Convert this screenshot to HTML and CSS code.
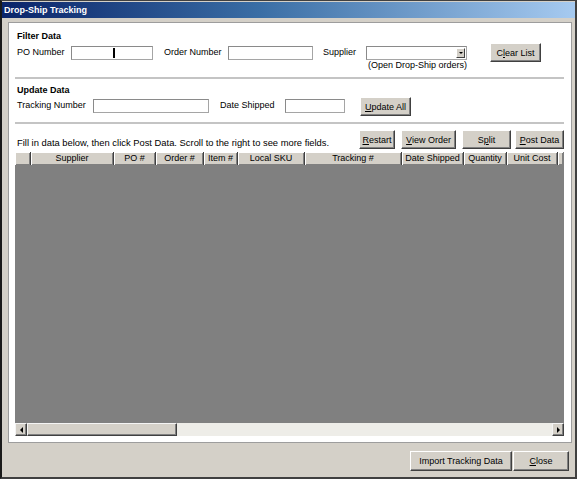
FILE: index.html
```html
<!DOCTYPE html>
<html>
<head>
<meta charset="utf-8">
<link rel="stylesheet" href="styles.css">
</head>
<body>
<div class="window">
  <div class="titlebar">Drop-Ship Tracking</div>
  <div class="client">
    <div class="panel">
      <div class="group-title">Filter Data</div>
      <div class="row row-filter">
        <span class="lbl w-po">PO Number</span>
        <div class="field w-po-in"><span class="caret"></span></div>
        <span class="lbl w-order gap11">Order Number</span>
        <div class="field w-order-in"></div>
        <span class="lbl w-sup gap10">Supplier</span>
        <div class="combo-col">
          <div class="combo"><span class="combo-btn"><span class="tri-down"></span></span></div>
          <div class="caption">(Open Drop-Ship orders)</div>
        </div>
        <button class="btn btn-clear">C<u>l</u>ear List</button>
      </div>
      <div class="sep sep1"></div>
      <div class="group-title gt2">Update Data</div>
      <div class="row row-update">
        <span class="lbl w-track">Tracking Number</span>
        <div class="field w-track-in"></div>
        <span class="lbl w-date gap11">Date Shipped</span>
        <div class="field w-date-in"></div>
        <button class="btn btn-update"><u>U</u>pdate All</button>
      </div>
      <div class="sep sep2"></div>
      <div class="row row-actions">
        <span class="hint">Fill in data below, then click Post Data. Scroll to the right to see more fields.</span>
        <button class="btn btn-restart"><u>R</u>estart</button>
        <button class="btn btn-view"><u>V</u>iew Order</button>
        <button class="btn btn-split">S<u>p</u>lit</button>
        <button class="btn btn-post"><u>P</u>ost Data</button>
      </div>
      <div class="grid">
        <div class="grid-head">
          <div class="hc c0"></div>
          <div class="hc c1">Supplier</div>
          <div class="hc c2">PO #</div>
          <div class="hc c3">Order #</div>
          <div class="hc c4">Item #</div>
          <div class="hc c5">Local SKU</div>
          <div class="hc c6">Tracking #</div>
          <div class="hc c7">Date Shipped</div>
          <div class="hc c8">Quantity</div>
          <div class="hc c9">Unit Cost</div>
          <div class="hc c10"></div>
        </div>
        <div class="grid-body"></div>
        <div class="hscroll">
          <div class="sb-btn"><span class="tri-left"></span></div>
          <div class="sb-thumb"></div>
          <div class="sb-track"></div>
          <div class="sb-btn"><span class="tri-right"></span></div>
        </div>
      </div>
    </div>
    <div class="footer">
      <button class="btn btn-import">Import Tracking Data</button>
      <button class="btn btn-close"><u>C</u>lose</button>
    </div>
  </div>
</div>
</body>
</html>
```

FILE: styles.css
```css
* { box-sizing: border-box; }
html, body { margin: 0; padding: 0; background: #d4d0c8; }
body {
  font-family: "Liberation Sans", Arial, sans-serif;
  font-size: 9px;
  color: #000;
}
.window {
  width: 577px;
  height: 479px;
  background: #d4d0c8;
  border-left: 2px solid #1a1a1a;
  border-top: 1px solid #404040;
  border-right: 2px solid #404040;
  border-bottom: 2px solid #404040;
  display: flex;
  flex-direction: column;
}
.titlebar {
  margin-top: 1px;
  height: 16px;
  line-height: 16px;
  padding-left: 2px;
  color: #fff;
  font-weight: bold;
  background: linear-gradient(to right, #0a246a 0%, #3a6ea5 45%, #a6caf0 100%);
}
.client {
  padding: 4px 3px 0 6px;
  display: flex;
  flex-direction: column;
}
.panel {
  background: #fff;
  border: 1px solid #9d9d9d;
  height: 421px;
  padding: 0 7px 6px 6px;
  display: flex;
  flex-direction: column;
}
.group-title {
  font-weight: bold;
  line-height: 12px;
  height: 12px;
  margin-top: 7px;
  padding-left: 2px;
}
.gt2 { margin-top: 5px; }
.row {
  display: flex;
  align-items: flex-start;
  padding-left: 2px;
}
.row-filter { height: 29px; }
.row-update { height: 20px; }
.lbl {
  display: block;
  line-height: 20px;
  white-space: nowrap;
  flex: none;
}
.row-update .lbl { line-height: 19px; }
.gap11 { margin-left: 11px; }
.gap10 { margin-left: 10px; }
.w-po { width: 54px; }
.w-order { width: 64px; }
.w-sup { width: 43px; }
.w-track { width: 76px; }
.w-date { width: 65px; }
.field {
  flex: none;
  height: 14px;
  margin-top: 4px;
  background: #fff;
  border: 1px solid #a5a5a5;
  border-top-color: #8a8a8a;
  border-left-color: #8a8a8a;
  position: relative;
}
.row-update .field { margin-top: 3px; }
.w-po-in { width: 82px; }
.w-order-in { width: 85px; }
.w-track-in { width: 116px; }
.w-date-in { width: 60px; }
.caret {
  position: absolute;
  left: 41px;
  top: 1px;
  width: 2px;
  height: 10px;
  background: #000;
}
.combo-col {
  flex: none;
  width: 101px;
  margin-top: 4px;
}
.combo {
  height: 14px;
  border: 1px solid #a5a5a5;
  border-top-color: #8a8a8a;
  border-left-color: #8a8a8a;
  background: #fff;
  display: flex;
  justify-content: flex-end;
  padding: 1px;
}
.combo-btn {
  width: 9px;
  height: 10px;
  background: #d4d0c8;
  border: 1px solid;
  border-color: #fff #404040 #404040 #fff;
  display: flex;
  align-items: center;
  justify-content: center;
}
.tri-down {
  width: 0; height: 0;
  border-left: 2px solid transparent;
  border-right: 2px solid transparent;
  border-top: 2px solid #000;
}
.caption {
  line-height: 11px;
  white-space: nowrap;
  padding-left: 2px;
}
.btn {
  flex: none;
  font-family: "Liberation Sans", Arial, sans-serif;
  font-size: 9px;
  color: #000;
  background: #d4d0c8;
  border: 1px solid;
  border-color: #fff #404040 #404040 #fff;
  box-shadow: inset -1px -1px 0 #808080;
  padding: 0;
  margin: 0;
  height: 19px;
  line-height: 16px;
  text-align: center;
  white-space: nowrap;
}
.btn-clear { width: 51px; margin-left: 23px; margin-top: 1px; }
.btn-update { width: 51px; margin-left: 15px; margin-top: 1px; }
.sep {
  height: 2px;
  background: #c4c4c4;
  flex: none;
}
.sep1 { margin-top: 6px; }
.sep2 { margin-top: 6px; }
.row-actions {
  margin-top: 6px;
  height: 19px;
  padding-left: 0;
}
.hint {
  flex: 1;
  padding-left: 2px;
  font-size: 9.4px;
  line-height: 12px;
  margin-top: 7px;
  white-space: nowrap;
}
.btn-restart { width: 36px; }
.btn-view { width: 55px; margin-left: 6px; }
.btn-split { width: 49px; margin-left: 6px; }
.btn-post { width: 49px; margin-left: 4px; }
.grid {
  margin-top: 3px;
  display: flex;
  flex-direction: column;
}
.grid-head {
  display: flex;
  height: 13px;
  background: #808080;
}
.hc {
  flex: none;
  height: 13px;
  line-height: 12px;
  text-align: center;
  background: #d4d0c8;
  box-shadow: inset 1px 1px 0 #fff, inset -1px -1px 0 #808080;
  border-right: 1px solid #404040;
  white-space: nowrap;
  overflow: hidden;
}
.c0 { width: 16px; }
.c1 { width: 83px; }
.c2 { width: 42px; }
.c3 { width: 48px; }
.c4 { width: 34px; }
.c5 { width: 67px; }
.c6 { width: 97px; }
.c7 { width: 62px; }
.c8 { width: 43px; }
.c9 { width: 51px; }
.c10 { width: 5px; border-right: none; }
.grid-body {
  height: 258px;
  background: #808080;
}
.hscroll {
  height: 13px;
  display: flex;
  background: #eeede8;
}
.sb-btn, .sb-thumb {
  background: #d4d0c8;
  border: 1px solid;
  border-color: #f4f4f4 #404040 #404040 #f4f4f4;
  box-shadow: inset -1px -1px 0 #808080;
}
.sb-btn {
  width: 12px;
  flex: none;
  display: flex;
  align-items: center;
  justify-content: center;
}
.sb-thumb { width: 150px; flex: none; }
.sb-track { flex: 1; }
.tri-left {
  width: 0; height: 0;
  border-top: 3px solid transparent;
  border-bottom: 3px solid transparent;
  border-right: 3px solid #000;
}
.tri-right {
  width: 0; height: 0;
  border-top: 3px solid transparent;
  border-bottom: 3px solid transparent;
  border-left: 3px solid #000;
}
.footer {
  display: flex;
  justify-content: flex-end;
  margin-top: 8px;
  padding-right: 3px;
}
.btn-import { width: 102px; height: 20px; line-height: 17px; }
.btn-close { width: 56px; height: 20px; line-height: 17px; margin-left: 1px; }
```
